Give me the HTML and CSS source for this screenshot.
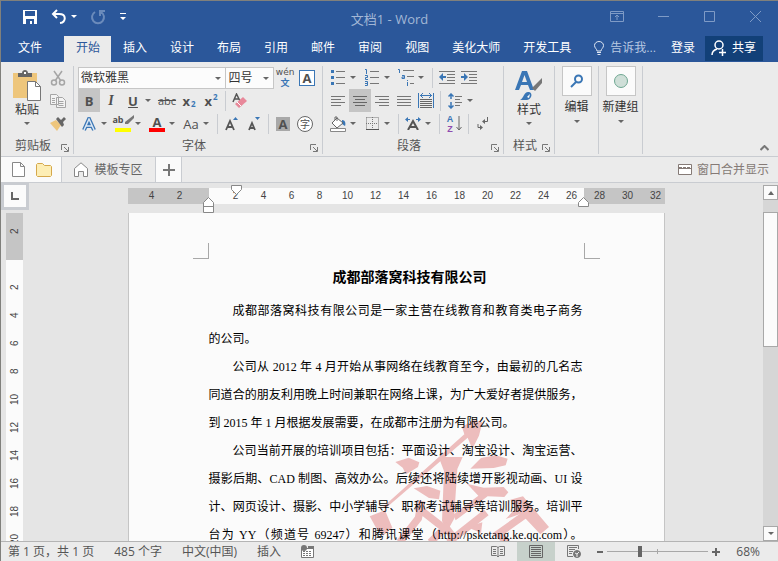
FILE: index.html
```
<!DOCTYPE html>
<html lang="zh-CN">

<head>
    <meta charset="utf-8">
    <title>文档1 - Word</title>
    <link rel="stylesheet" href="styles.css">
</head>

<body>
    <header class="titlebar">
        <div class="quick">
            <button aria-label="保存"><svg width="16" height="16" viewBox="0 0 16 16"><path d="M1 1h14v14H1z" fill="#fff"/><path d="M3 2h10v5H3zM4 10h8v5h-2v-3H8v3H4z" fill="#2b579a"/></svg></button>
            <button aria-label="撤消" class="undo"><svg width="16" height="16" viewBox="0 0 16 16" fill="none" stroke="#fff" stroke-width="2"><path d="M6 1L2 5l4 4M2 5h6c8 0 7 8 1 9"/></svg><i class="caret light"></i></button>
            <button aria-label="恢复"><svg width="16" height="16" viewBox="0 0 16 16" fill="none" stroke="#6b8bbb" stroke-width="2"><path d="M5 3a6 6 0 1 0 6 0M10 7V2h5"/></svg></button>
            <button aria-label="自定义"><svg width="8" height="8" viewBox="0 0 8 8" fill="#fff"><path d="M1 0h6v1H1zM1 4h6L4 7z"/></svg></button>
        </div>
        <h1>文档1 - Word</h1>
        <div class="winbtns">
            <button aria-label="功能区显示选项"><svg width="14" height="11" viewBox="0 0 14 11" fill="none" stroke="#7f9bc6"><path d="M.5.5h13v10H.5zM.5 2.500h13M7 9V4M5 6l2-2 2 2"/></svg></button>
            <button aria-label="最小化"><svg width="11" height="11" viewBox="0 0 11 11" stroke="#7f9bc6"><path d="M0 5.500h11"/></svg></button>
            <button aria-label="最大化"><svg width="11" height="11" viewBox="0 0 11 11" fill="none" stroke="#7f9bc6"><path d="M.5.5h10v10H.5z"/></svg></button>
            <button aria-label="关闭"><svg width="11" height="11" viewBox="0 0 11 11" stroke="#7f9bc6"><path d="M0 0l11 11M11 0L0 11"/></svg></button>
        </div>
    </header>

    <nav class="tabs">
        <button>文件</button>
        <button class="active">开始</button>
        <button>插入</button>
        <button>设计</button>
        <button>布局</button>
        <button>引用</button>
        <button>邮件</button>
        <button>审阅</button>
        <button>视图</button>
        <button>美化大师</button>
        <button>开发工具</button>
        <button class="tell"><svg width="10" height="14" viewBox="0 0 10 14" fill="none" stroke="#dfe7f3"><path d="M3 10c0-2-2.500-3-2.500-5.500a4.500 4 0 0 1 9 0C9.500 7 7 8 7 10zM3 11.500h4M3.500 13.500h3"/></svg>告诉我...</button>
        <button class="login">登录</button>
        <button class="share"><svg width="16" height="16" viewBox="0 0 16 16" fill="none" stroke="#fff" stroke-width="1.500"><circle cx="8" cy="5" r="4"/><path d="M1 15c0-3 2-5 5-6M8 12.500h7M11.500 9v7"/></svg>共享</button>
    </nav>

    <section class="ribbon">
        <div class="group clip">
            <div class="tools across">
                <button class="big"><svg width="28" height="31" viewBox="0 0 28 31"><path d="M0 3h24v25H0z" fill="#eec67c"/><path d="M5 7V3h4c0-4 6-4 6 0h4v4z" fill="#666"/><path d="M11 2h2v2h-2z" fill="#fff"/><path d="M14.500 11.500h8l5 5v14h-13z" fill="#fff" stroke="#777"/><path d="M22.500 11.500v5h5" fill="none" stroke="#777"/></svg><span>粘贴</span><i class="caret"></i></button>
                <div class="stack">
                    <button aria-label="剪切"><svg width="16" height="16" viewBox="0 0 16 16" fill="none" stroke="#a5a5a5" stroke-width="1.500"><path d="M4 1l7 10M12 1L5 11"/><circle cx="4" cy="12.500" r="2.500"/><circle cx="12" cy="12.500" r="2.500"/></svg></button>
                    <button aria-label="复制"><svg width="16" height="14" viewBox="0 0 16 14" fill="#f3f3f3" stroke="#a5a5a5"><path d="M.5.5h6l2 2v8h-8zM6.500 3.500h6l3 3v7h-9z"/><path d="M2 4.500h3M2 6.500h3M2 8.500h3M8.500 7.500h5M8.500 9.500h5M8.500 11.500h5"/></svg></button>
                    <button aria-label="格式刷"><svg width="16" height="15" viewBox="0 0 16 15"><path d="M0 7l6-3 5 5-4 6z" fill="#eec67c"/><path d="M6 3l2-2 3 3 3-3 2 2-3 3 1 3-2 2z" fill="#666"/></svg></button>
                </div>
            </div>
            <footer><span>剪贴板</span><button class="launch" aria-label="剪贴板设置"><svg width="8" height="8" viewBox="0 0 8 8" fill="none" stroke="#777"><path d="M.5 6V.5H6M3 3l4 4M7.500 3v4.500H3"/></svg></button></footer>
        </div>

        <div class="group font">
            <div class="tools">
                <div class="row">
                    <span class="pick face"><select aria-label="字体"><option>微软雅黑</option></select></span>
                    <span class="pick size"><select aria-label="字号"><option>四号</option></select></span>
                    <button class="pinyin"><span>wén</span><b>文</b></button>
                    <button aria-label="字符边框"><span class="boxed">A</span></button>
                </div>
                <div class="row">
                    <button class="on"><b>B</b></button>
                    <button class="ital">I</button>
                    <button class="under">U</button><i class="caret"></i>
                    <button class="strike">abc</button>
                    <button class="sub"><b>x</b><sub>2</sub></button>
                    <button class="sub"><b>x</b><sup>2</sup></button>
                    <i class="sep"></i>
                    <button aria-label="清除格式"><svg width="16" height="16" viewBox="0 0 16 16"><path d="M1 9l3.500-8L8 8M2.500 6H7" fill="none" stroke="#555" stroke-width="1.500"/><path d="M3 11l8-7 4 4-8 7z" fill="#e8889a"/><path d="M5 9l4 4" stroke="#fff"/></svg></button>
                </div>
                <div class="row">
                    <button aria-label="文本效果"><svg width="14" height="14" viewBox="0 0 14 14"><path d="M2 13L7 2l5 11M4 9h6" fill="none" stroke="#3a76b5" stroke-width="4"/><path d="M2 13L7 2l5 11M4 9h6" fill="none" stroke="#dce8f4" stroke-width="1.500"/></svg></button><i class="caret"></i>
                    <button class="ink yellow"><span class="ab">ab</span><svg width="10" height="10" viewBox="0 0 10 10"><path d="M10 0v3L4 9H1V7z" fill="#777"/></svg></button><i class="caret"></i>
                    <button class="ink red"><b>A</b></button><i class="caret"></i>
                    <button>Aa</button><i class="caret"></i>
                    <i class="sep"></i>
                    <button aria-label="增大字号"><svg width="14" height="14" viewBox="0 0 14 14"><path d="M1 13L5 4l4 9M2.500 10h5" fill="none" stroke="#555" stroke-width="1.800"/><path d="M8 3l2.500-3L13 3z" fill="#3a76b5"/></svg></button>
                    <button aria-label="减小字号"><svg width="14" height="14" viewBox="0 0 14 14"><path d="M2 13l3-7 3 7M3 11h4" fill="none" stroke="#555" stroke-width="1.800"/><path d="M8 0l2.500 3L13 0z" fill="#3a76b5"/></svg></button>
                    <i class="sep"></i>
                    <button aria-label="字符底纹"><span class="shaded">A</span></button>
                    <button aria-label="带圈字符"><span class="ringed">字</span></button>
                </div>
            </div>
            <footer><span>字体</span><button class="launch" aria-label="字体设置"><svg width="8" height="8" viewBox="0 0 8 8" fill="none" stroke="#777"><path d="M.5 6V.5H6M3 3l4 4M7.500 3v4.500H3"/></svg></button></footer>
        </div>

        <div class="group para">
            <div class="tools">
                <div class="row">
                    <button aria-label="项目符号"><svg width="14" height="15" viewBox="0 0 14 15"><path d="M0 0h3v3H0zM0 6h3v3H0zM0 12h3v3H0z" fill="#3a76b5"/><path d="M5 1.500h9M5 7.500h9M5 13.500h9" stroke="#777"/></svg></button><i class="caret"></i>
                    <button aria-label="编号"><svg width="14" height="17" viewBox="0 0 14 17"><path d="M0 .5h1.500V5M0 6.500h2.500v2H.5v2H3M0 12.500h2.500v4H0M0 14.500h2.500" fill="none" stroke="#3a76b5"/><path d="M5 2.500h9M5 8.500h9M5 14.500h9" stroke="#777"/></svg></button><i class="caret"></i>
                    <button aria-label="多级列表"><svg width="16" height="17" viewBox="0 0 16 17"><path d="M0 .5h1.500V4M4 6.500h2.500v3H4v-1.500h2M9.500 11v1M9.500 13v4" fill="none" stroke="#3a76b5"/><path d="M5 1.500h11M9 7.500h7M12 14.500h4" stroke="#777"/></svg></button><i class="caret"></i>
                    <i class="sep"></i>
                    <button aria-label="减少缩进量"><svg width="16" height="13" viewBox="0 0 16 13"><path d="M0 .5h16M8 3.500h8M8 6.500h8M8 9.500h8M0 12.500h16" stroke="#777"/><path d="M0 6l4-4v3h3v2H4v3z" fill="#3a76b5"/></svg></button>
                    <button aria-label="增加缩进量"><svg width="16" height="13" viewBox="0 0 16 13"><path d="M0 .5h16M8 3.500h8M8 6.500h8M8 9.500h8M0 12.500h16" stroke="#777"/><path d="M7 6L3 2v3H0v2h3v3z" fill="#3a76b5"/></svg></button>
                </div>
                <div class="row">
                    <button aria-label="左对齐"><svg width="14" height="10" viewBox="0 0 14 10" stroke="#777"><path d="M0 .5h14M0 3.500h10M0 6.500h14M0 9.500h10"/></svg></button>
                    <button aria-label="居中" class="on"><svg width="14" height="10" viewBox="0 0 14 10" stroke="#666"><path d="M0 .5h14M2 3.500h10M0 6.500h14M2 9.500h10"/></svg></button>
                    <button aria-label="右对齐"><svg width="14" height="10" viewBox="0 0 14 10" stroke="#777"><path d="M0 .5h14M4 3.500h10M0 6.500h14M4 9.500h10"/></svg></button>
                    <button aria-label="两端对齐"><svg width="14" height="10" viewBox="0 0 14 10" stroke="#777"><path d="M0 .5h14M0 3.500h14M0 6.500h14M0 9.500h14"/></svg></button>
                    <button aria-label="分散对齐"><svg width="16" height="16" viewBox="0 0 16 16" fill="none"><path d="M.5 0v15M15.500 0v15M2 2.500h12M5 0L2.500 2.500 5 5M11 0l2.500 2.500L11 5" stroke="#3a76b5"/><path d="M2 6.500h12M2 8.500h12M2 10.500h12M2 12.500h12M2 14.500h12" stroke="#666"/></svg></button>
                    <i class="sep"></i>
                    <button aria-label="行距"><svg width="14" height="16" viewBox="0 0 14 16" fill="none"><path d="M3 1v5M.5 3.500L3 1l2.500 2.500M3 9v6M.5 12.500L3 15l2.500-2.500" stroke="#3a76b5" stroke-width="1.500"/><path d="M7 3.500h7M7 6.500h5M7 9.500h7M7 12.500h5" stroke="#777"/></svg></button><i class="caret"></i>
                </div>
                <div class="row">
                    <button aria-label="底纹"><svg width="16" height="16" viewBox="0 0 16 16"><path d="M12 4c3 0 4 3 3 6l-3-2z" fill="#3a76b5"/><path d="M2 7l5-5 6 5-6 5zM5 4V1h2v4" fill="#fff" stroke="#666"/><path d="M.5 12.500h15v3H.5z" fill="#fff" stroke="#888"/></svg></button><i class="caret"></i>
                    <button aria-label="边框"><svg width="13" height="13" viewBox="0 0 13 13" fill="none" stroke="#777"><path d="M.5.5h12v12M.5.5v12M6.500 0v12M0 6.500h12" stroke-dasharray="1 1"/><path d="M0 12.500h13" stroke="#555"/></svg></button><i class="caret"></i>
                    <i class="sep"></i>
                    <button aria-label="中文版式"><svg width="16" height="13" viewBox="0 0 16 13"><path d="M3 13l5-9 5 9M5 10h6" fill="none" stroke="#555" stroke-width="2"/><path d="M0 2.500L3 0v2h2v1H3v2zM16 2.500L13 0v2h-2v1h2v2z" fill="#3a76b5"/></svg></button><i class="caret"></i>
                    <i class="sep"></i>
                    <button class="sort"><span>A<em>Z</em></span><svg width="6" height="15" viewBox="0 0 6 15" fill="none" stroke="#666"><path d="M3 0v14M.5 11L3 14l2.500-3"/></svg></button>
                    <i class="sep"></i>
                    <button aria-label="显示编辑标记"><svg width="12" height="13" viewBox="0 0 12 13" fill="none" stroke="#666"><path d="M10.500 0v4.500H6"/><path d="M5 4.500L8 2v5zM6 10.500L3 8v5z" fill="#666" stroke="none"/><path d="M1 7v3.500h3"/></svg></button>
                </div>
            </div>
            <footer><span>段落</span><button class="launch" aria-label="段落设置"><svg width="8" height="8" viewBox="0 0 8 8" fill="none" stroke="#777"><path d="M.5 6V.5H6M3 3l4 4M7.500 3v4.500H3"/></svg></button></footer>
        </div>

        <div class="group style">
            <div class="tools">
                <button class="big"><svg width="28" height="31" viewBox="0 0 28 31"><path d="M0 20L7 1h5l7 19h-4l-2-5H6l-2 5zM7 12h5L9.500 5z" fill="#3a76b5"/><path d="M27 8v5l-7 8-3-3z" fill="#777"/><path d="M5 30c4-2 4-9 9-8 4 1 3 7-2 8z" fill="#3a76b5"/><path d="M12 27l3-3-1 4z" fill="#fff"/></svg><span>样式</span><i class="caret"></i></button>
            </div>
            <footer><span>样式</span><button class="launch" aria-label="样式设置"><svg width="8" height="8" viewBox="0 0 8 8" fill="none" stroke="#777"><path d="M.5 6V.5H6M3 3l4 4M7.500 3v4.500H3"/></svg></button></footer>
        </div>

        <div class="group single">
            <button class="big"><span class="tile"><svg width="14" height="14" viewBox="0 0 14 14" fill="none" stroke="#3a76b5" stroke-width="2"><circle cx="8.500" cy="5" r="3.500"/><path d="M6 8l-5 5"/></svg></span><span>编辑</span><i class="caret"></i></button>
        </div>
        <div class="group single">
            <button class="big"><span class="tile"><svg width="14" height="14" viewBox="0 0 14 14"><circle cx="7" cy="7" r="6.500" fill="#cfdfd8" stroke="#6fa792"/></svg></span><span>新建组</span><i class="caret"></i></button>
        </div>
        <button class="fold" aria-label="折叠功能区"><svg width="9" height="6" viewBox="0 0 9 6" fill="none" stroke="#777" stroke-width="2"><path d="M.5 5l4-4 4 4"/></svg></button>
    </section>

    <div class="docbar">
        <div class="files">
            <button aria-label="新建"><svg width="13" height="15" viewBox="0 0 13 15" fill="#fff" stroke="#888"><path d="M.5.5h8l4 4v10H.5zM8.500.5v4h4"/></svg></button>
            <button aria-label="打开"><svg width="16" height="14" viewBox="0 0 16 14" fill="#fdeeb5" stroke="#d5a84c"><path d="M.5 12.500v-11l1-1h5l2 2h6l1 1v9l-1 1h-13z"/></svg></button>
        </div>
        <button class="doctab"><svg width="14" height="15" viewBox="0 0 14 15" fill="#fff" stroke="#888"><path d="M.5 6.500L7 .8l6.500 5.700v8h-4v-5h-5v5h-4z"/></svg>模板专区</button>
        <button class="add" aria-label="新标签"><svg width="12" height="12" viewBox="0 0 12 12" stroke="#777" stroke-width="2"><path d="M6 0v12M0 6h12"/></svg></button>
        <button class="merge"><svg width="14" height="11" viewBox="0 0 14 11" fill="#fff" stroke="#857a76"><path d="M.5.5h13v10H.5zM0 4.500h14"/><path d="M1 3.500h12" stroke-dasharray="3 1"/></svg>窗口合并显示</button>
    </div>

    <main class="work">
        <div class="side">
            <button class="corner" aria-label="制表符"><svg width="8" height="8" viewBox="0 0 8 8" fill="none" stroke="#666" stroke-width="2"><path d="M1 0v7h7"/></svg></button>
            <div class="vruler">
                <span>2</span><span></span><span>2</span><span>4</span><span>6</span><span>8</span><span>10</span><span>12</span><span>14</span><span>16</span><span>18</span><span>20</span>
            </div>
        </div>
        <div class="canvas">
            <div class="hruler">
                <span>4</span><span>2</span><span></span><span>2</span><span>4</span><span>6</span><span>8</span><span>10</span><span>12</span><span>14</span><span>16</span><span>18</span><span>20</span><span>22</span><span>24</span><span>26</span><span>28</span><span>30</span><span>32</span>
                <svg class="mark mark-first" width="11" height="10" viewBox="0 0 11 10" fill="#fff" stroke="#888"><path d="M.5.5h10v4l-5 5-5-5z"/></svg>
                <svg class="mark mark-hang" width="11" height="16" viewBox="0 0 11 16" fill="#fff" stroke="#888"><path d="M.5 15.500v-10l5-5 5 5v10zM.5 9.500h10"/></svg>
                <svg class="mark mark-right" width="11" height="10" viewBox="0 0 11 10" fill="#fff" stroke="#888"><path d="M.5 9.500v-4l5-5 5 5v4z"/></svg>
            </div>
            <article class="page">
                <svg class="stamp" width="187" height="125" viewBox="500 20 561 375" fill="#edbdbd">
                    <path d="M785 50l35-22 26 8-10 40-20 40-14-34-246 212-8-4 244-218z"/>
                    <path d="M508 318l46-18 22 52-28 24-20-22z"/>
                    <path d="M585 155l40-13 32 14-4 14-36 22-10-20zM842 143l44-8 36 10-6 20-36 8-70 2z"/>
                    <path d="M715 140h72l-16 36-10 150-20 36-16-30 6-150z"/>
                    <path d="M640 234l40-7 40 14-4 26-30-4zM800 220l50 12 60-2 14 16-12 14-50-2-96 72-8-16 76-58z"/>
                    <path d="M930 268l38-10 78 92-26 22-58-62-46 16 30-32z"/>
                    <path d="M800 350l46-14-4 32z"/>
                    <g fill="none" stroke="#edbdbd" stroke-width="22">
                        <path d="M664 272l-10 52-56 72M650 290l92 72M858 306L744 396M976 312l-82 58 26 26M690 396l46-46 30 40"/>
                    </g>
                </svg>
                <i class="crop crop-left"></i><i class="crop crop-right"></i>
                <h2>成都部落窝科技有限公司</h2>
                <p>
                    <span class="line start">成都部落窝科技有限公司是一家主营在线教育和教育类电子商务</span>
                    <span class="line end">的公司。</span>
                </p>
                <p>
                    <span class="line start">公司从 2012 年 4 月开始从事网络在线教育至今，由最初的几名志</span>
                    <span class="line">同道合的朋友利用晚上时间兼职在网络上课，为广大爱好者提供服务，</span>
                    <span class="line end">到 2015 年 1 月根据发展需要，在成都市注册为有限公司。</span>
                </p>
                <p>
                    <span class="line start">公司当前开展的培训项目包括：平面设计、淘宝设计、淘宝运营、</span>
                    <span class="line">摄影后期、CAD 制图、高效办公。后续还将陆续增开影视动画、UI 设</span>
                    <span class="line">计、网页设计、摄影、中小学辅导、职称考试辅导等培训服务。培训平</span>
                    <span class="line">台为 YY（频道号 69247）和腾讯课堂（http://psketang.ke.qq.com）。</span>
                </p>
            </article>
        </div>
        <div class="scroll">
            <button aria-label="向上"><i class="caret up"></i></button>
            <div class="track"><div class="thumb"></div></div>
            <button aria-label="向下"><i class="caret"></i></button>
        </div>
    </main>

    <footer class="status">
        <span>第 1 页，共 1 页</span>
        <span>485 个字</span>
        <span>中文(中国)</span>
        <span>插入</span>
        <svg width="13" height="13" viewBox="0 0 13 13"><path d="M.5 3.500h12v9H.5z" fill="#fff" stroke="#777"/><path d="M7 1h6v3H7z" fill="#777"/><path d="M2 6.500h9M2 8.500h9M2 10.500h9" stroke="#777" stroke-dasharray="2 1"/><circle cx="3" cy="3" r="3" fill="#777"/></svg>
        <div class="views">
            <button aria-label="阅读视图"><svg width="14" height="13" viewBox="0 0 14 13" fill="none" stroke="#777"><path d="M.5 1.500h5l1.500 1 1.500-1h5v9h-5L7 12l-1.500-1.500h-5zM7 2v10M2 4.500h3M2 6.500h3M2 8.500h3M9 4.500h3M9 6.500h3M9 8.500h3"/></svg></button>
            <button aria-label="页面视图" class="current"><svg width="14" height="13" viewBox="0 0 14 13" fill="none" stroke="#666"><path d="M.5.5h13v12H.5zM2 2.500h10M2 4.500h10M2 6.500h10M2 8.500h10M2 10.500h10"/></svg></button>
            <button aria-label="Web 版式"><svg width="14" height="13" viewBox="0 0 14 13" fill="none" stroke="#777"><path d="M6 11.500H.5V.5h11V4M2 2.500h8M2 4.500h6M2 6.500h4M2 8.500h3"/><circle cx="10" cy="9" r="3.500" fill="#777"/><path d="M8 8l2 1 2-2M10 9v3" stroke="#eee"/></svg></button>
        </div>
        <div class="zoombar">
            <button aria-label="缩小"><svg width="6" height="8" viewBox="0 0 6 8" stroke="#666" stroke-width="2"><path d="M0 4h6"/></svg></button>
            <input class="zoom" type="range" min="0" max="100" value="32" aria-label="显示比例">
            <button aria-label="放大"><svg width="8" height="8" viewBox="0 0 8 8" stroke="#666" stroke-width="2"><path d="M0 4h8M4 0v8"/></svg></button>
        </div>
        <span class="percent">68%</span>
    </footer>
</body>

</html>
```

FILE: styles.css
```
* {
    box-sizing: border-box;
}

body {
    display: flex;
    flex-direction: column;
    height: 100vh;
    margin: 0;
    overflow: hidden;
    border-top: 1px solid #80807c;
    border-left: 1px solid #80807c;
    background-color: #ebebeb;
    color: #444;
    font: 12px/16px "Liberation Sans", "Noto Sans CJK SC", sans-serif;
}

button {
    display: flex;
    align-items: center;
    justify-content: center;
    margin: 0;
    padding: 0;
    border: none;
    background: none;
    color: inherit;
    font: inherit;
    white-space: nowrap;
}

svg {
    flex: none;
}

/* Title bar */
.titlebar {
    display: grid;
    grid-template-columns: 1fr auto 1fr;
    align-items: center;
    height: 35px;
    background-color: #2b579a;
}

.titlebar h1 {
    margin: 0;
    color: #a3b7d6;
    font-size: 13px;
    font-weight: normal;
    font-family: "Open Sans", "Noto Sans CJK SC", sans-serif;
}

.quick {
    display: flex;
    align-items: center;
    gap: 13px;
    padding: 0 0 4px 21px;
}

.undo {
    gap: 4px;
}

.winbtns {
    display: flex;
    justify-content: flex-end;
    padding-bottom: 4px;
}

.winbtns button {
    width: 46px;
    height: 30px;
}

.caret {
    flex: none;
    width: 6px;
    border: 3px solid transparent;
    border-top-color: #666;
    border-bottom: none;
}

.caret.light {
    border-top-color: #fff;
}

.caret.up {
    border-top: none;
    border-bottom: 4px solid #666;
}

/* Ribbon tabs */
.tabs {
    display: flex;
    height: 26px;
    background-color: #2b579a;
    color: #fff;
}

.tabs button {
    padding: 0 11px 2px 12px;
}

.tabs button:first-child {
    padding: 0 22px 2px 17px;
}

.tabs .active {
    background-color: #ebebeb;
    color: #2b579a;
}

.tabs .tell {
    gap: 6px;
    padding-right: 0;
    color: #b9c9e2;
}

.tabs .login {
    margin-left: auto;
    padding: 0 10px 2px;
}

.tabs .share {
    gap: 5px;
    margin-right: 15px;
    margin-bottom: 1px;
    padding: 0 7px 2px 6px;
    background-color: #124078;
}

/* Ribbon */
.ribbon {
    display: flex;
    height: 95px;
    padding-top: 4px;
    border-bottom: 1px solid #c9ccd1;
}

.group {
    display: flex;
    flex-direction: column;
    height: 88px;
    padding: 0 4px;
    border-right: 1px solid #c9ccd1;
}

.clip {
    width: 73px;
}

.font {
    width: 249px;
}

.para {
    width: 181px;
}

.style {
    width: 51px;
}

.single {
    width: 44px;
    align-items: center;
}

.tools {
    flex: 1;
}

.across {
    display: flex;
    align-items: flex-start;
    gap: 8px;
    padding-left: 8px;
}

.row {
    display: flex;
    align-items: center;
    height: 23px;
}

.row button {
    width: 22px;
    height: 23px;
    color: #505050;
    font-size: 13px;
    font-family: "Open Sans", sans-serif;
}

.row .caret {
    margin: 0 5px 0 1px;
}

.row .on {
    background-color: #c5c5c5;
}

.sep {
    width: 1px;
    height: 20px;
    margin: 0 3px;
    background-color: #c9ccd1;
}

.stack button {
    width: 18px;
    height: 23px;
}

.group .big {
    flex-direction: column;
    padding-top: 4px;
    color: #333;
}

.single .big {
    padding-top: 0;
}

.style .big {
    width: 100%;
}

.big span {
    margin: 1px 0 4px;
}

.single .big span {
    margin: 3px 0 5px;
}

.single .big .tile {
    display: flex;
    align-items: center;
    justify-content: center;
    width: 30px;
    height: 30px;
    margin: 0;
    border: 1px solid #c6c6c6;
    background-color: #fbfbfb;
}

.group footer {
    display: flex;
    align-items: center;
    color: #555;
}

.group footer span {
    flex: 1;
    text-align: center;
}

.launch {
    padding-top: 4px;
}

.fold {
    align-self: flex-end;
    margin-left: auto;
    padding: 0 9px 5px 0;
}

.pick {
    position: relative;
    height: 22px;
    border: 1px solid #c6c6c6;
    background-color: #fcfcfc;
}

.pick::after {
    content: "";
    position: absolute;
    top: 9px;
    right: 4px;
    border: 3px solid transparent;
    border-top-color: #666;
    border-bottom: none;
    pointer-events: none;
}

.pick select {
    width: 100%;
    height: 20px;
    padding: 0 2px;
    border: none;
    appearance: none;
    background: none;
    color: #333;
    font: inherit;
}

.face {
    width: 149px;
}

.size {
    width: 48px;
    border-left: none;
}

.row .pinyin {
    flex-direction: column;
    font: 9px/10px "DejaVu Sans", "Noto Sans CJK SC", sans-serif;
}

.pinyin b {
    color: #3a76b5;
    line-height: 12px;
}

.boxed {
    width: 16px;
    height: 16px;
    border: 1px solid #3a76b5;
    background-color: #fff;
    font-weight: bold;
    line-height: 14px;
}

.row .ital {
    font: italic bold 14px "Liberation Serif", serif;
}

.row .under {
    font-weight: bold;
    text-decoration: underline;
}

.row .strike {
    font-size: 11px;
    text-decoration: line-through;
}

.row .sub {
    gap: 1px;
}

.sub sub,
.sub sup {
    color: #3a76b5;
    font-size: 8px;
    font-weight: bold;
    line-height: 8px;
}

.sub sub {
    align-self: flex-end;
    padding-bottom: 4px;
}

.sub sup {
    align-self: flex-start;
    padding-top: 4px;
}

.row .ink {
    width: 16px;
    height: 17px;
    margin: 0 3px;
    border-bottom: 4px solid #ff0;
    line-height: 12px;
}

.row .red {
    border-bottom-color: #f00;
}

.row .yellow {
    align-items: flex-start;
}

.row .ab {
    font-size: 9px;
    font-weight: bold;
    line-height: 9px;
}

.shaded {
    width: 14px;
    height: 14px;
    background-color: #a8a8a8;
    font-weight: bold;
    line-height: 14px;
}

.ringed {
    width: 16px;
    height: 16px;
    border: 1px solid #666;
    border-radius: 50%;
    background-color: #fff;
    font: 10px/14px "Noto Sans CJK SC", sans-serif;
}

.row .sort {
    gap: 2px;
    color: #3a76b5;
    font: bold 9px/10px "Liberation Sans", sans-serif;
}

.sort span {
    width: 8px;
    white-space: normal;
}

.sort em {
    display: block;
    color: #8e4bb0;
    font-style: normal;
}

/* Document tabs */
.docbar {
    display: flex;
    height: 26px;
    border-bottom: 1px solid #c9ccd1;
    color: #666;
}

.files {
    display: flex;
    gap: 11px;
    width: 61px;
    padding-left: 11px;
    border-right: 1px solid #c9ccd1;
    background-color: #fafafa;
}

.doctab {
    gap: 6px;
    width: 94px;
    border-right: 1px solid #c9ccd1;
}

.add {
    width: 26px;
    border-right: 1px solid #c9ccd1;
    background-color: #fafafa;
}

.merge {
    gap: 5px;
    margin-left: auto;
    padding-right: 9px;
    color: #857a76;
}

/* Work area */
.work {
    display: flex;
    flex: 1;
    min-height: 0;
    overflow: hidden;
    background-color: #e5e5e5;
    font-size: 10px;
}

.side {
    width: 28px;
    overflow: hidden;
}

.corner {
    width: 28px;
    height: 27px;
    border: solid #c9ccd1;
    border-width: 2px 3px 3px;
    background-color: #fbfbfb;
}

.vruler {
    width: 17px;
    margin: 3px 0 0 5px;
    padding-top: 4px;
    background: linear-gradient(#c5c5c5 47px, #fbfbfb 47px);
}

.vruler span {
    display: flex;
    align-items: center;
    justify-content: center;
    width: 17px;
    height: 28px;
    writing-mode: vertical-rl;
    transform: rotate(180deg);
}

.canvas {
    flex: 1;
    min-width: 0;
    overflow: hidden;
}

.hruler {
    position: relative;
    display: flex;
    width: 537px;
    height: 16px;
    margin: 5px auto 9px;
    padding-left: 10px;
    background: linear-gradient(90deg, #c5c5c5 81px, #fbfbfb 81px 456px, #c5c5c5 456px);
}

.hruler span {
    flex: none;
    width: 28px;
    line-height: 16px;
    text-align: center;
}

.mark {
    position: absolute;
}

.mark-first {
    top: -3px;
    left: 103px;
}

.mark-hang {
    top: 9px;
    left: 75px;
}

.mark-right {
    top: 9px;
    left: 450px;
}

.page {
    position: relative;
    z-index: 0;
    width: 537px;
    min-height: 100%;
    margin: 0 auto;
    padding: 51px 81px 0 80px;
    border: solid #c5c5c5;
    border-width: 0 1px;
    background-color: #fbfbfb;
    color: #000;
    font: 12px/28px "Liberation Serif", "Noto Sans CJK SC", serif;
}

.stamp {
    position: absolute;
    z-index: -1;
    top: 204px;
    left: 238px;
}

.crop {
    position: absolute;
    top: 30px;
    width: 16px;
    height: 16px;
    border: solid #a8a8a8;
    border-width: 0 1px 1px 0;
}

.crop-left {
    left: 64px;
}

.crop-right {
    right: 64px;
    border-width: 0 0 1px 1px;
}

.page h2 {
    margin: 0 0 5px;
    font-size: 14px;
    text-align: center;
    text-indent: 28px;
}

.page p {
    margin: 0;
}

.line {
    display: block;
    text-align: justify;
    text-align-last: justify;
    white-space: nowrap;
}

.start {
    text-indent: 24px;
}

.end {
    text-align-last: left;
}

.scroll {
    display: flex;
    flex-direction: column;
    width: 15px;
    padding-top: 2px;
}

.scroll button {
    height: 15px;
    border: 1px solid #a8a8a8;
    background-color: #fbfbfb;
}

.track {
    flex: 1;
    padding-top: 12px;
    background-color: #d6d6d6;
}

.thumb {
    height: 43%;
    border: 1px solid #a8a8a8;
    background-color: #fbfbfb;
}

/* Status bar */
.status {
    display: flex;
    align-items: center;
    gap: 20px;
    height: 20px;
    padding: 0 18px 0 7px;
    border-top: 1px solid #b4b4b4;
    color: #555;
    font-family: "Open Sans", "Noto Sans CJK SC", sans-serif;
}

.views {
    display: flex;
    align-self: stretch;
    margin-left: auto;
}

.views button {
    width: 38px;
}

.views .current {
    background-color: #c7d1cb;
}

.zoombar {
    display: flex;
    align-items: center;
    gap: 4px;
    margin: 0 -4px 0 -16px;
}

.zoom {
    width: 101px;
    height: 12px;
    margin: 0;
    appearance: none;
    background: linear-gradient(#a8a8a8, #a8a8a8) 50% 50% / 100% 1px no-repeat, linear-gradient(#a8a8a8, #a8a8a8) 50% 50% / 1px 5px no-repeat;
}

.zoom::-webkit-slider-thumb {
    appearance: none;
    width: 4px;
    height: 11px;
    background-color: #666;
}
```
